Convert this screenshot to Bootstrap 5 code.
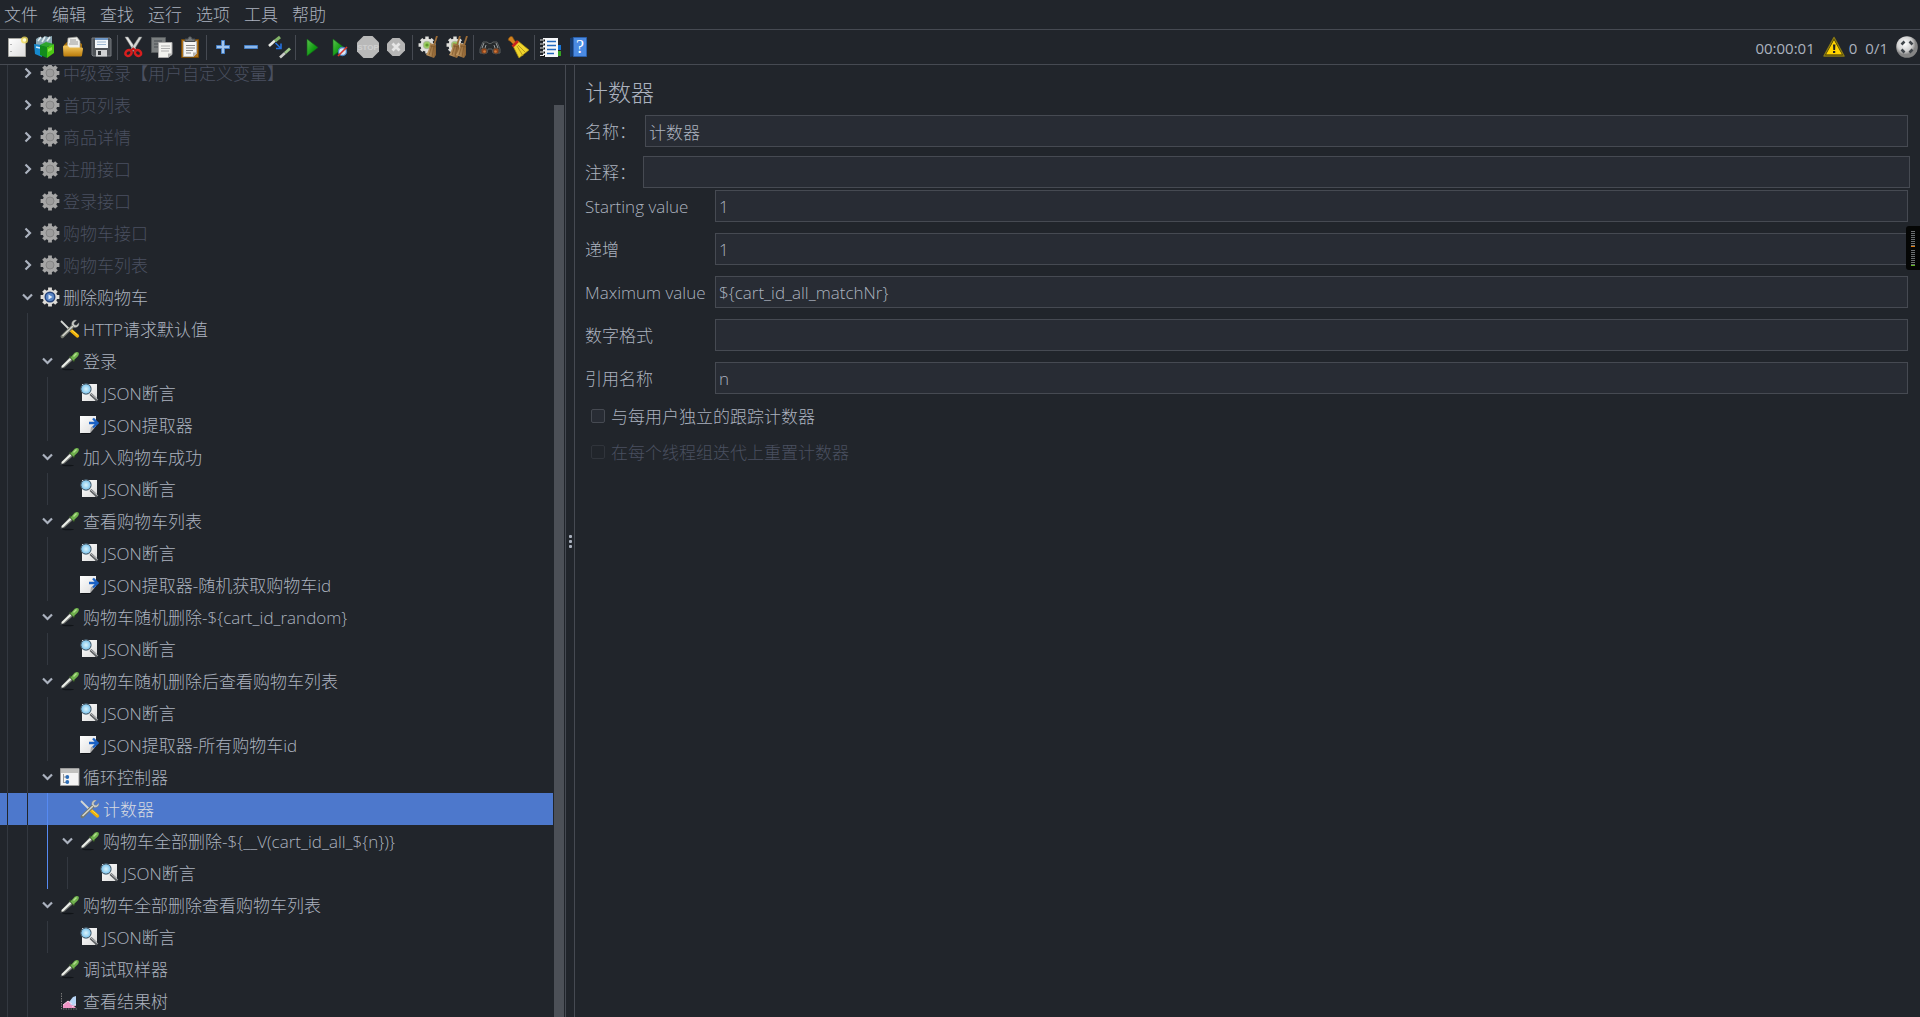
<!DOCTYPE html>
<html lang="zh-CN">
<head>
<meta charset="utf-8">
<meta name="viewport" content="width=device-width, initial-scale=1">
<title>JMeter</title>
<link href="https://cdn.jsdelivr.net/npm/bootstrap@5.3.0/dist/css/bootstrap.min.css" rel="stylesheet">
<style>
:root { --ink:#abb2bf; --dim:#4a5060; --bg:#21252b; --field:#282c34; --line:#464a52; --rule:#333840; --pick:#4d78cc; }
body { background:var(--bg); color:var(--ink); font-family:"Open Sans","Noto Sans CJK SC",sans-serif; font-size:17px; line-height:24px; font-weight:300; }
.menu-bar { height:30px; border-bottom:1px solid var(--line); padding:0 0 0 4px; gap:14px; }
.menu-bar a { color:var(--ink); text-decoration:none; }
.tool-bar { height:35px; border-bottom:1px solid var(--line); padding:0 2px 0 3px; }
.tool-bar button { width:28px; height:28px; padding:3px; border:0; background:none; display:block; }
.tool-bar svg { display:block; width:22px; height:22px; overflow:visible; }
.tool-sep { width:1px; height:25px; margin:0 2px; background:var(--line); }
.run-state { font-size:15px; font-weight:400; }
.run-state span { padding-top:2px; }
.tree-pane { width:554px; }
.tree-list { margin:-8px 1px 0 0; }
.tree-list li { display:flex; align-items:center; height:32px; padding-left:7px; white-space:nowrap; }
.tree-list li > span:last-child { padding-top:2px; }
.tree-list i { align-self:stretch; width:20px; border-left:1px solid var(--rule); }
.tree-list i.g-end { width:10px; }
.tree-list i.g-on { border-color:#568af2; }
.tree-list .fold { width:20px; height:20px; margin-right:3px; padding:0; border:0; background:none; display:block; }
.tree-list .fold svg { display:block; width:20px; height:20px; }
.tree-list .node-ico { width:20px; height:20px; margin-right:3px; }
.tree-list .off { color:var(--dim); }
.tree-list .picked { background:var(--pick); color:#d7dae0; }
.tree-list .picked i:not(.g-on) { border-color:var(--bg); }
.tree-scroll { width:11px; padding-top:40px; }
.tree-thumb { background:#4c5057; width:10px; }
.splitter { width:10px; gap:2px; border:solid var(--line); border-width:0 1px; }
.splitter b { width:3px; height:3px; background:var(--ink); border-radius:1px; }
.editor { padding:12px 12px 0 10px; }
.editor h1 { font-size:23px; line-height:30px; font-weight:300; margin:0 0 8px; }
.editor label { padding-top:2px; }
.editor .field { display:flex; align-items:center; height:32px; margin-bottom:11px; }
.editor .field label { width:130px; flex:none; }
.editor .field.f-name { margin-bottom:9px; }
.editor .f-name label { width:60px; }
.editor .field.f-note { margin:0 -2px 2px 0; }
.editor .f-note label { width:58px; }
.editor .field input { flex:1; min-width:0; height:32px; padding:0 3px; background:var(--field); border:1px solid var(--line); border-radius:0; color:var(--ink); font-size:17px; font-weight:inherit; }
.tick { height:36px; padding-left:6px; gap:6px; }
.tick input { appearance:none; width:14px; height:14px; margin:0; background:var(--field); border:1px solid var(--line); border-radius:2px; }
.tick input:disabled { background:none; border-color:#30343b; }
.tick.off { color:var(--dim); }
.meter { position:absolute; right:0; top:226px; width:14px; height:44px; padding:5px 5px 0; background:#050605; border-radius:3px 0 0 3px; }
.meter span { display:block; height:16px; margin-bottom:3px; width:4px; background:repeating-linear-gradient(#6d7072 0 1px,transparent 1px 2px); border-bottom:1px solid #e07b10; }
.meter span + span { border-color:#5fb81c; }
</style>
<script src="https://cdn.jsdelivr.net/npm/bootstrap@5.3.0/dist/js/bootstrap.bundle.min.js"></script>
</head>
<body class="vh-100 d-flex flex-column overflow-hidden position-relative">

<svg width="0" height="0" class="position-absolute" aria-hidden="true">
<defs>
<linearGradient id="gPaper" x1="0" y1="0" x2="1" y2="1"><stop offset="0" stop-color="#fff"/><stop offset="1" stop-color="#dcdcdc"/></linearGradient>
<linearGradient id="gGreen" x1="0" y1="0" x2="1" y2="1"><stop offset="0" stop-color="#5cc44e"/><stop offset=".6" stop-color="#109a12"/><stop offset="1" stop-color="#0a6c0c"/></linearGradient>
<linearGradient id="gFold" x1="0" y1="0" x2="0" y2="1"><stop offset="0" stop-color="#f6cc62"/><stop offset="1" stop-color="#b97a0a"/></linearGradient>
<linearGradient id="gBroom" x1="0" y1="0" x2="1" y2="0"><stop offset="0" stop-color="#c9a06a"/><stop offset="1" stop-color="#8a6030"/></linearGradient>
<radialGradient id="gBall" cx=".4" cy=".35"><stop offset="0" stop-color="#fff"/><stop offset=".7" stop-color="#d0d0d0"/><stop offset="1" stop-color="#858585"/></radialGradient>
<radialGradient id="gLens"><stop offset="0" stop-color="#d9f4fd"/><stop offset="1" stop-color="#7fc3ea"/></radialGradient>
<symbol id="s-shut" viewBox="0 0 20 20"><path d="M8.500 5.500L13 10l-4.500 4.500" fill="none" stroke="#abb2bf" stroke-width="2.200"/></symbol>
<symbol id="s-open" viewBox="0 0 20 20"><path d="M6 7.500l4.500 4.500L15 7.500" fill="none" stroke="#abb2bf" stroke-width="2.200"/></symbol>
<symbol id="s-cog" viewBox="0 0 20 20"><circle cx="10" cy="10" r="7.300" fill="currentColor"/><path d="M10 .6v18.800M.6 10h18.800M3.500 3.500l13 13M16.500 3.500l-13 13" stroke="currentColor" stroke-width="3.800"/></symbol>
<symbol id="s-cogoff" viewBox="0 0 20 20"><use href="#s-cog" color="#a6a6a6"/><circle cx="10" cy="10" r="4" fill="#9c9c9c" stroke="#858585"/></symbol>
<symbol id="s-cogon" viewBox="0 0 20 20"><use href="#s-cog" color="#dedcd8"/><circle cx="10" cy="10" r="4.800" fill="#5884c4" stroke="#27457c" stroke-width="1.400"/><path d="M8.500 7.500l4 2.500-4 2.500z" fill="#e4eefb"/></symbol>
<symbol id="s-tools" viewBox="0 0 20 20"><path d="M1 2l9 9" stroke="#d4d7d4" stroke-width="1.800"/><path d="M10 10.500l7.500 6.500" stroke="#eeb008" stroke-width="3.400" stroke-linecap="round"/><path d="M11.500 11l6 5" stroke="#ffdc44" stroke-width="1"/><path d="M2.300 17.500L13 7" stroke="#74786f" stroke-width="3.400" stroke-linecap="round"/><path d="M2.500 17L13 7" stroke="#d5d7d0" stroke-width="1.500"/><path d="M16.500 1.200l-2.700 2.700.5 2 2.200.4 2.400-2.500c.5 3-1.500 5-4.400 4.600l-2.700-2.600c-.5-3 2-5.200 4.700-4.600z" fill="#cfd1cc" stroke="#777b76" stroke-width=".5"/></symbol>
<symbol id="s-drop" viewBox="0 0 20 20"><ellipse cx="8" cy="18.500" rx="6" ry=".8" fill="#111418"/><path d="M.5 17.500l1.500-3L10 6l3 3-8.500 7.500z" fill="#777a76"/><path d="M2 16L11.500 7" stroke="#edf0ea" stroke-width="2"/><path d="M9.700 5.200l4.800 5" stroke="#345525" stroke-width="2"/><path d="M10.500 6.500L14 2.500c1.300-1.600 3.800-2 4.500-.9.900 1.200.1 3.200-1.300 4.400L13.500 9.500z" fill="#6fb04d"/><path d="M13.500 5.500l3-3" stroke="#b3df8e" stroke-width="1.500"/></symbol>
<symbol id="s-assert" viewBox="0 0 20 20"><path d="M2 1h15v15l-2 2H2z" fill="url(#gPaper)"/><path d="M10.500 11l7 6.500" stroke="#5a5d60" stroke-width="2.800"/><path d="M10.500 10.500l7 6" stroke="#c8cacc" stroke-width="1"/><circle cx="6" cy="6" r="5" fill="url(#gLens)" stroke="#526b7c" stroke-width="1.300"/><circle cx="6" cy="6" r="4" fill="none" stroke="#8fd0f4"/></symbol>
<symbol id="s-extract" viewBox="0 0 20 20"><path d="M1 18.500h10" stroke="#101317"/><path d="M0 1h16v10l-6 7H0z" fill="url(#gPaper)"/><path d="M10 18l1-6 5-1z" fill="#aaa"/><path d="M9 8h7M13 3.500l4.500 4.500L13 12.500" fill="none" stroke="#1c62c4" stroke-width="2.400"/></symbol>
<symbol id="s-loop" viewBox="0 0 20 20"><path d="M.5 1.500h18.500v17H.5z" fill="#f4f4f4" stroke="#9b9b9b"/><path d="M1 2h17.500v4H1z" fill="#c1c1bf"/><path d="M3.500 7v9M3.500 10h3M3.500 15.500h3" stroke="#999" stroke-width="1" fill="none"/><circle cx="7.300" cy="10" r="1.900" fill="#2e6eb7"/><circle cx="7.300" cy="15" r="1.900" fill="#2e6eb7"/></symbol>
<symbol id="s-graph" viewBox="0 0 20 20"><path d="M1.500 2v16H17" stroke="#777" fill="none" stroke-dasharray="1.500 1"/><path d="M3 17v-3l5-4 4 3 4 4z" fill="#ef95c5"/><path d="M9 11l4-5 3-1v10l-5-1z" fill="#b8d5f6"/><path d="M3 14l5-4 4 3M12 16l4-3" stroke="#fbd6ea" fill="none"/></symbol>
<symbol id="s-broom" viewBox="0 0 12 22"><path d="M11 0L8 9" stroke="#9b6b36" stroke-width="1.800"/><path d="M4 7l6 2v10l-2 3-8-3c2-3 3.500-7 4-12z" fill="url(#gBroom)"/><path d="M6 9l-3 10M8 10l-2 11M4 10l6 1" stroke="#80582b" stroke-width=".7"/></symbol>
<symbol id="s-cogmini" viewBox="0 0 20 20"><use href="#s-cog" color="#e0e0dc"/><circle cx="10" cy="10" r="4.200" fill="#9acb62" stroke="#a9b59c"/><circle cx="10" cy="10" r="1.800" fill="#5f9a2b"/></symbol>
</defs>
</svg>

<nav class="menu-bar d-flex align-items-center flex-shrink-0" aria-label="菜单">
<a href="#">文件</a><a href="#">编辑</a><a href="#">查找</a><a href="#">运行</a><a href="#">选项</a><a href="#">工具</a><a href="#">帮助</a>
</nav>

<div class="tool-bar d-flex align-items-center flex-shrink-0">
<button type="button" aria-label="新建"><svg viewBox="0 0 22 22"><path d="M2.500 2.500h17v18h-17z" fill="url(#gPaper)" stroke="#a5a5a0"/><path d="M5 8v1M5 15v1" stroke="#777"/><circle cx="18.500" cy="4" r="3.600" fill="#f0dc5a" opacity=".8"/><circle cx="18.500" cy="4" r="1.800" fill="#fffbd0"/></svg></button>
<button type="button" aria-label="模板"><svg viewBox="0 0 22 22"><path d="M2 3l3-2 3 1 3-2 3 1 4-1v10H2z" fill="#8aa7b3"/><path d="M4 5l3-4M8 6l3-5M13 5l3-4" stroke="#e3edf0" stroke-width="1.600"/><path d="M0 8l8 1v12L1 18z" fill="#1689cd"/><path d="M2 11l4 1" stroke="#d3f0ff" stroke-width="1.500"/><path d="M6 9l7 1v12l-7-3z" fill="#128a1c"/><path d="M13 11l7-3v9l-7 5z" fill="#4cc814"/><path d="M6 9l6-3 8 2-7 3z" fill="#2ea62e"/><path d="M14 13l4-2v3l-4 2z" fill="#8fe34c"/></svg></button>
<button type="button" aria-label="打开"><svg viewBox="0 0 22 22"><path d="M2 9l3-3h12l3 2v6H2z" fill="#a56f0c"/><path d="M6 2l9-1 3 4v8H5z" fill="#f1f1ed" stroke="#9b9b96" stroke-width=".7"/><path d="M8 4h6M8 6h8M7 8h9" stroke="#999"/><path d="M1 11c0-1 .5-1.500 1.500-1.500h3l2 2h12c1 0 1.500.5 1.500 1.500l-1 6.500c-.2.8-.7 1-1.500 1H3c-1 0-1.500-.4-1.600-1.300z" fill="url(#gFold)"/></svg></button>
<button type="button" aria-label="保存"><svg viewBox="0 0 22 22"><path d="M2 2h18l1 1v17H3l-1-1z" fill="#4e5257" stroke="#777b80"/><path d="M5 2h13v10H5z" fill="#f2f5f8"/><path d="M5 2h13v2H5z" fill="#6f98c8"/><path d="M7 6h9M7 8.500h9" stroke="#9bb5cf"/><path d="M6 14h11v6.500H6z" fill="#d0d2d4"/><path d="M8 15h3v4H8z" fill="#33373b"/></svg></button>
<span class="tool-sep"></span>
<button type="button" aria-label="剪切"><svg viewBox="0 0 22 22"><path d="M2 1h3l8 12-2 2.500z" fill="#e3e4e2" stroke="#8c8f8d" stroke-width=".5"/><path d="M19 1h-3L8 13l2 2.500z" fill="#d2d4d1" stroke="#777b78" stroke-width=".5"/><ellipse cx="5.500" cy="17" rx="3.300" ry="2.700" fill="none" stroke="#d81e1e" stroke-width="2.500" transform="rotate(-35 5.500 17)"/><ellipse cx="15" cy="17" rx="3.300" ry="2.700" fill="none" stroke="#d81e1e" stroke-width="2.500" transform="rotate(35 15 17)"/><path d="M7.500 15l2.800-2.500 2.800 2.500" fill="none" stroke="#c21818" stroke-width="2"/></svg></button>
<button type="button" aria-label="复制"><svg viewBox="0 0 22 22"><path d="M.5 1.500h14v15H.5z" fill="#7b7f80" stroke="#575b5d"/><path d="M3 5h8M3 8h5M3 11h5" stroke="#4d5154"/><path d="M7.500 6.500H21v12l-4 3H7.500z" fill="#f2f2ef" stroke="#aaa"/><path d="M10 10h9M10 12.500h9M10 15h8" stroke="#b0b0b0"/><path d="M17 21.500v-4h4z" fill="#aaa"/></svg></button>
<button type="button" aria-label="粘贴"><svg viewBox="0 0 22 22"><path d="M2.500 3.500h17v18h-17z" fill="#ad7018" stroke="#714708"/><path d="M4.500 5.500h13v12l-3 3h-10z" fill="#f5f5f3" stroke="#b9b9b7"/><path d="M7 9.500h9M7 12h9M7 14.500h7M7 17h5" stroke="#888"/><path d="M6 5.500V3h3c0-3 4-3 4 0h3v2.500z" fill="#74787a" stroke="#474b4e"/><path d="M14 20.500v-4h4z" fill="#b2b2b2"/></svg></button>
<span class="tool-sep"></span>
<button type="button" aria-label="展开"><svg viewBox="0 0 22 22"><path d="M9.500 4.500h3v5h5v3h-5v5h-3v-5h-5v-3h5z" fill="#a3c6ee" stroke="#4680c6"/></svg></button>
<button type="button" aria-label="折叠"><svg viewBox="0 0 22 22"><path d="M4.500 9.500h13v3h-13z" fill="#8db7e8" stroke="#4680c6"/></svg></button>
<button type="button" aria-label="切换"><svg viewBox="0 0 22 22"><path d="M1 10l6-5.500" stroke="#e9ebe6" stroke-width="2.600"/><path d="M7 5l5-4" stroke="#82b368" stroke-width="3"/><path d="M12 21.500l5-4.500" stroke="#c9cac7" stroke-width="2.600"/><path d="M17 17l5-4.500" stroke="#9dc78b" stroke-width="2.800"/><path d="M7.500 7l5 5M13 7.500V12.500H8" fill="none" stroke="#2370df" stroke-width="1.600"/></svg></button>
<span class="tool-sep"></span>
<button type="button" aria-label="启动"><svg viewBox="0 0 22 22"><path d="M6 3l11 8.500L6 20z" fill="url(#gGreen)" stroke="#13661a" stroke-width=".6"/></svg></button>
<button type="button" aria-label="不停顿启动"><svg viewBox="0 0 22 22"><path d="M4 3l11 8.500L4 20z" fill="url(#gGreen)" stroke="#13661a" stroke-width=".6"/><circle cx="13.500" cy="15.500" r="4" fill="#d6e6f7" stroke="#4c80bd" stroke-width="1.300"/><path d="M9 20l9-9" stroke="#d9362a" stroke-width="1.600"/></svg></button>
<button type="button" aria-label="停止"><svg viewBox="0 0 22 22"><path d="M6.500 0h9l6.500 6.500v9L15.500 22h-9L0 15.500v-9z" fill="#b9b9b9"/><text x="11" y="14" text-anchor="middle" font-family="Liberation Sans" font-size="8" font-weight="700" fill="#d0d0d0">STOP</text></svg></button>
<button type="button" aria-label="关闭"><svg viewBox="0 0 22 22"><path d="M7.500 2h7l5.500 5.500v7L14.500 20h-7L2 14.500v-7z" fill="#b5b5b5"/><path d="M7.500 7.500l7 7M14.500 7.500l-7 7" stroke="#e6e6e6" stroke-width="2.800"/></svg></button>
<span class="tool-sep"></span>
<button type="button" aria-label="清除"><svg viewBox="0 0 22 22"><use href="#s-cogmini" width="18" height="18"/><use href="#s-broom" x="8" width="12" height="22"/></svg></button>
<button type="button" aria-label="清除全部"><svg viewBox="0 0 22 22"><use href="#s-cogmini" width="18" height="18"/><use href="#s-broom" x="3" width="12" height="22"/><use href="#s-broom" x="10" width="12" height="22"/></svg></button>
<span class="tool-sep"></span>
<button type="button" aria-label="查找"><svg viewBox="0 0 22 22"><path d="M4 6h4l2 1.500h2L14 6h4l3 7v4h-7l-1-4H9l-1 4H1v-4z" fill="#26292b" stroke="#5c6061"/><path d="M5 7l-2 5M17 7l2 5M7 9l-1 3M15 9l1 3" stroke="#9a9e9f"/><circle cx="5" cy="15" r="3" fill="#8f4218" stroke="#55483e"/><circle cx="17" cy="15" r="3" fill="#8f4218" stroke="#55483e"/><circle cx="5.500" cy="15.500" r="1.300" fill="#d07a3c"/><circle cx="16.500" cy="15.500" r="1.300" fill="#d07a3c"/></svg></button>
<button type="button" aria-label="清扫"><svg viewBox="0 0 22 22"><path d="M2 2c1-2 4-2 4 0l4 6-2 2-5-5C1 5 1 3 2 2z" fill="#d38320" stroke="#86500e" stroke-width=".7"/><path d="M6 10l5-5 11 9-10 8z" fill="#efd52c" stroke="#ac8f10" stroke-width=".7"/><path d="M10 10l6 10M11 9l8 8" stroke="#b7981a"/><path d="M5.500 10.500L11 5" stroke="#c9251d" stroke-width="2.600"/></svg></button>
<span class="tool-sep"></span>
<button type="button" aria-label="函数助手"><svg viewBox="0 0 22 22"><path d="M17 9h4v5h-4z" fill="#1874d4"/><path d="M17 15h4v5h-4z" fill="#34a323"/><path d="M3 2h15v19H3z" fill="#f7f8fa"/><path d="M7 5.500h9M7 9.500h9M7 13.500h9M7 17.500h7" stroke="#2268bd" stroke-width="1.500"/><path d="M1 4.500h4M1 8.500h4M1 12.500h4M1 16.500h4M1 20h4" stroke="#111" stroke-width="2.200"/><path d="M0 4h4M0 8h4M0 12h4M0 16h4M0 19.500h4" stroke="#e5e5e5" stroke-width="1.200"/></svg></button>
<button type="button" aria-label="帮助"><svg viewBox="0 0 22 22"><path d="M2 2l4-1v19l-4 1z" fill="#173b6c"/><path d="M5.500 1.500h13v19h-13z" fill="#4a8ae2" stroke="#2b60ab"/><text x="12" y="17" text-anchor="middle" font-family="Liberation Serif" font-size="18" fill="#fff">?</text></svg></button>
<span class="tool-sep invisible"></span>
<div class="run-state ms-auto d-flex align-items-center">
<span class="me-2">00:00:01</span>
<svg viewBox="0 0 22 22" role="img" aria-label="警告"><path d="M11 1.500L21 20H1z" fill="#211c08" stroke="#8a7a12" stroke-width="1.500" stroke-linejoin="round"/><path d="M11 4l8 14.500H3z" fill="#ffd400"/><path d="M10 8.500h2.400l-.3 5.500h-1.800zM10 15h2.200v2H10z" fill="#222"/></svg>
<span class="ms-1 me-2">0</span><span class="me-2">0/1</span>
<svg viewBox="0 0 22 22" role="img" aria-label="远程状态"><circle cx="11" cy="11" r="10.800" fill="url(#gBall)"/><g stroke="#40454a" stroke-width="2.600" fill="none"><path d="M5.500 8.500l3-3M13.500 5.500l3 3M5.500 13.500l3 3M13.500 16.500l3-3"/></g></svg>
</div>
</div>

<main class="d-flex flex-grow-1 overflow-hidden">
<section class="tree-pane overflow-hidden flex-shrink-0" aria-label="测试计划">
<ul class="tree-list list-unstyled" role="tree">
<li role="treeitem" class="off"><i class="g-end"></i><button class="fold" type="button" aria-label="展开"><svg><use href="#s-shut"/></svg></button><svg class="node-ico"><use href="#s-cogoff"/></svg><span>中级登录【用户自定义变量】</span></li>
<li role="treeitem" class="off"><i class="g-end"></i><button class="fold" type="button" aria-label="展开"><svg><use href="#s-shut"/></svg></button><svg class="node-ico"><use href="#s-cogoff"/></svg><span>首页列表</span></li>
<li role="treeitem" class="off"><i class="g-end"></i><button class="fold" type="button" aria-label="展开"><svg><use href="#s-shut"/></svg></button><svg class="node-ico"><use href="#s-cogoff"/></svg><span>商品详情</span></li>
<li role="treeitem" class="off"><i class="g-end"></i><button class="fold" type="button" aria-label="展开"><svg><use href="#s-shut"/></svg></button><svg class="node-ico"><use href="#s-cogoff"/></svg><span>注册接口</span></li>
<li role="treeitem" class="off"><i class="g-end"></i><span class="fold"></span><svg class="node-ico"><use href="#s-cogoff"/></svg><span>登录接口</span></li>
<li role="treeitem" class="off"><i class="g-end"></i><button class="fold" type="button" aria-label="展开"><svg><use href="#s-shut"/></svg></button><svg class="node-ico"><use href="#s-cogoff"/></svg><span>购物车接口</span></li>
<li role="treeitem" class="off"><i class="g-end"></i><button class="fold" type="button" aria-label="展开"><svg><use href="#s-shut"/></svg></button><svg class="node-ico"><use href="#s-cogoff"/></svg><span>购物车列表</span></li>
<li role="treeitem"><i class="g-end"></i><button class="fold" type="button" aria-label="折叠"><svg><use href="#s-open"/></svg></button><svg class="node-ico"><use href="#s-cogon"/></svg><span>删除购物车</span></li>
<li role="treeitem"><i></i><i class="g-end"></i><span class="fold"></span><svg class="node-ico"><use href="#s-tools"/></svg><span>HTTP请求默认值</span></li>
<li role="treeitem"><i></i><i class="g-end"></i><button class="fold" type="button" aria-label="折叠"><svg><use href="#s-open"/></svg></button><svg class="node-ico"><use href="#s-drop"/></svg><span>登录</span></li>
<li role="treeitem"><i></i><i></i><i class="g-end"></i><span class="fold"></span><svg class="node-ico"><use href="#s-assert"/></svg><span>JSON断言</span></li>
<li role="treeitem"><i></i><i></i><i class="g-end"></i><span class="fold"></span><svg class="node-ico"><use href="#s-extract"/></svg><span>JSON提取器</span></li>
<li role="treeitem"><i></i><i class="g-end"></i><button class="fold" type="button" aria-label="折叠"><svg><use href="#s-open"/></svg></button><svg class="node-ico"><use href="#s-drop"/></svg><span>加入购物车成功</span></li>
<li role="treeitem"><i></i><i></i><i class="g-end"></i><span class="fold"></span><svg class="node-ico"><use href="#s-assert"/></svg><span>JSON断言</span></li>
<li role="treeitem"><i></i><i class="g-end"></i><button class="fold" type="button" aria-label="折叠"><svg><use href="#s-open"/></svg></button><svg class="node-ico"><use href="#s-drop"/></svg><span>查看购物车列表</span></li>
<li role="treeitem"><i></i><i></i><i class="g-end"></i><span class="fold"></span><svg class="node-ico"><use href="#s-assert"/></svg><span>JSON断言</span></li>
<li role="treeitem"><i></i><i></i><i class="g-end"></i><span class="fold"></span><svg class="node-ico"><use href="#s-extract"/></svg><span>JSON提取器-随机获取购物车id</span></li>
<li role="treeitem"><i></i><i class="g-end"></i><button class="fold" type="button" aria-label="折叠"><svg><use href="#s-open"/></svg></button><svg class="node-ico"><use href="#s-drop"/></svg><span>购物车随机删除-${cart_id_random}</span></li>
<li role="treeitem"><i></i><i></i><i class="g-end"></i><span class="fold"></span><svg class="node-ico"><use href="#s-assert"/></svg><span>JSON断言</span></li>
<li role="treeitem"><i></i><i class="g-end"></i><button class="fold" type="button" aria-label="折叠"><svg><use href="#s-open"/></svg></button><svg class="node-ico"><use href="#s-drop"/></svg><span>购物车随机删除后查看购物车列表</span></li>
<li role="treeitem"><i></i><i></i><i class="g-end"></i><span class="fold"></span><svg class="node-ico"><use href="#s-assert"/></svg><span>JSON断言</span></li>
<li role="treeitem"><i></i><i></i><i class="g-end"></i><span class="fold"></span><svg class="node-ico"><use href="#s-extract"/></svg><span>JSON提取器-所有购物车id</span></li>
<li role="treeitem"><i></i><i class="g-end"></i><button class="fold" type="button" aria-label="折叠"><svg><use href="#s-open"/></svg></button><svg class="node-ico"><use href="#s-loop"/></svg><span>循环控制器</span></li>
<li role="treeitem" class="picked" aria-selected="true"><i></i><i></i><i class="g-end g-on"></i><span class="fold"></span><svg class="node-ico"><use href="#s-tools"/></svg><span>计数器</span></li>
<li role="treeitem"><i></i><i></i><i class="g-end g-on"></i><button class="fold" type="button" aria-label="折叠"><svg><use href="#s-open"/></svg></button><svg class="node-ico"><use href="#s-drop"/></svg><span>购物车全部删除-${__V(cart_id_all_${n})}</span></li>
<li role="treeitem"><i></i><i></i><i class="g-on"></i><i class="g-end"></i><span class="fold"></span><svg class="node-ico"><use href="#s-assert"/></svg><span>JSON断言</span></li>
<li role="treeitem"><i></i><i class="g-end"></i><button class="fold" type="button" aria-label="折叠"><svg><use href="#s-open"/></svg></button><svg class="node-ico"><use href="#s-drop"/></svg><span>购物车全部删除查看购物车列表</span></li>
<li role="treeitem"><i></i><i></i><i class="g-end"></i><span class="fold"></span><svg class="node-ico"><use href="#s-assert"/></svg><span>JSON断言</span></li>
<li role="treeitem"><i></i><i class="g-end"></i><span class="fold"></span><svg class="node-ico"><use href="#s-drop"/></svg><span>调试取样器</span></li>
<li role="treeitem"><i></i><i class="g-end"></i><span class="fold"></span><svg class="node-ico"><use href="#s-graph"/></svg><span>查看结果树</span></li>
</ul>
</section>
<div class="tree-scroll d-flex flex-shrink-0"><div class="tree-thumb"></div></div>
<div class="splitter d-flex flex-column align-items-center justify-content-center flex-shrink-0"><b></b><b></b><b></b></div>

<form class="editor flex-grow-1">
<h1>计数器</h1>
<div class="field f-name"><label for="fName">名称：</label><input id="fName" type="text" value="计数器"></div>
<div class="field f-note"><label for="fNote">注释：</label><input id="fNote" type="text"></div>
<div class="field"><label for="fStart">Starting value</label><input id="fStart" type="text" value="1"></div>
<div class="field"><label for="fStep">递增</label><input id="fStep" type="text" value="1"></div>
<div class="field"><label for="fMax">Maximum value</label><input id="fMax" type="text" value="${cart_id_all_matchNr}"></div>
<div class="field"><label for="fFmt">数字格式</label><input id="fFmt" type="text"></div>
<div class="field mb-1"><label for="fRef">引用名称</label><input id="fRef" type="text" value="n"></div>
<div class="tick d-flex align-items-center"><input type="checkbox" id="cUser"><label for="cUser">与每用户独立的跟踪计数器</label></div>
<div class="tick off d-flex align-items-center"><input type="checkbox" id="cReset" disabled><label for="cReset">在每个线程组迭代上重置计数器</label></div>
</form>
</main>

<div class="meter"><span></span><span></span></div>
</body>
</html>
